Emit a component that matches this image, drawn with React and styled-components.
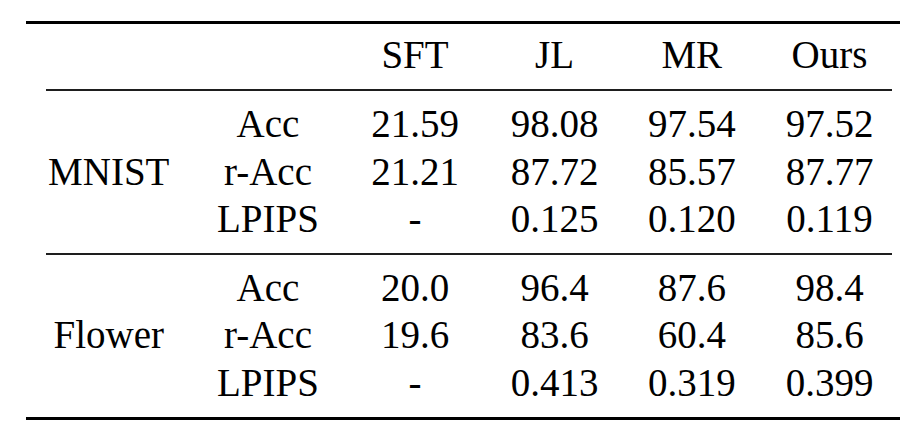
import React from "react";
import styled, { createGlobalStyle } from "styled-components";

const Global = createGlobalStyle`
  html, body { margin: 0; padding: 0; background: #ffffff; }
  body { font-family: "Liberation Serif", Tinos, "Times New Roman", Times, "Nimbus Roman", "DejaVu Serif", serif; color: #000; }
`;

const COLS = "165.5px 153px 141px 138px 136.5px 139px";

const Page = styled.div`
  width: 924px;
  height: 440px;
  padding-top: 21px;
  box-sizing: border-box;
  background: #fff;
`;

const Table = styled.div`
  margin-left: 26px;
  width: 874px;
  display: flex;
  flex-direction: column;
`;

const ThickRule = styled.div`
  height: 3px;
  background: #000;
`;

const ThinRule = styled.div`
  height: 2px;
  margin: 0 8px 0 20px;
  background: #1e1e1e;
`;

const Row = styled.div`
  display: grid;
  grid-template-columns: ${COLS};
  padding: 7px 0 10.5px;
`;

const Block = styled.div`
  display: grid;
  grid-template-columns: ${COLS};
  grid-template-rows: repeat(3, 47.5px);
  padding: ${(p) => p.$pt}px 0 ${(p) => p.$pb}px;
`;

const Cell = styled.div`
  font-family: "Liberation Serif", Tinos, "Times New Roman", Times, "Nimbus Roman", "DejaVu Serif", serif;
  font-size: 39px;
  line-height: 47.5px;
  text-align: center;
  white-space: nowrap;
  grid-row: ${(p) => (p.$span ? "1 / span 3" : "auto")};
  align-self: center;
`;

const header = ["", "", "SFT", "JL", "MR", "Ours"];

const blocks = [
  {
    name: "MNIST",
    rows: [
      ["Acc", "21.59", "98.08", "97.54", "97.52"],
      ["r-Acc", "21.21", "87.72", "85.57", "87.77"],
      ["LPIPS", "-", "0.125", "0.120", "0.119"],
    ],
    pt: 9,
    pb: 10.5,
  },
  {
    name: "Flower",
    rows: [
      ["Acc", "20.0", "96.4", "87.6", "98.4"],
      ["r-Acc", "19.6", "83.6", "60.4", "85.6"],
      ["LPIPS", "-", "0.413", "0.319", "0.399"],
    ],
    pt: 8.5,
    pb: 11,
  },
];

export default function App() {
  return (
    <Page>
      <Global />
      <Table>
        <ThickRule />
        <Row>
          {header.map((h, i) => (
            <Cell key={i}>{h}</Cell>
          ))}
        </Row>
        {blocks.map((b) => (
          <React.Fragment key={b.name}>
            <ThinRule />
            <Block $pt={b.pt} $pb={b.pb}>
              <Cell $span>{b.name}</Cell>
              {b.rows.map((r, ri) =>
                r.map((v, ci) => <Cell key={ri + "-" + ci}>{v}</Cell>)
              )}
            </Block>
          </React.Fragment>
        ))}
        <ThickRule />
      </Table>
    </Page>
  );
}
